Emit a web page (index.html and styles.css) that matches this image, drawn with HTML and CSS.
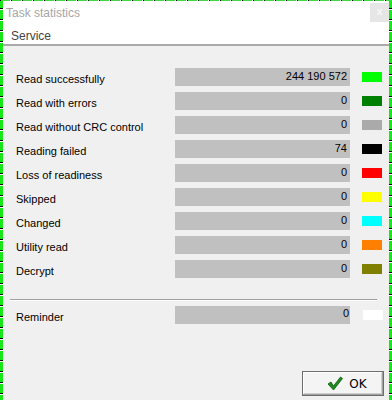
FILE: index.html
```html
<!DOCTYPE html>
<html lang="en">
<head>
    <title>Task statistics</title>
    <link rel="stylesheet" href="styles.css">
</head>
<body>
    <div class="frame">
        <div class="window">
            <!-- Title area -->
            <div class="titlebar">
                <div class="title-row">
                    <span class="title">Task statistics</span>
                    <span class="close">x</span>
                </div>
                <div class="menu">Service</div>
            </div>

            <div class="content">
                <div class="stats">
                    <div class="row">
                        <span class="label">Read successfully</span>
                        <span class="value">244 190 572</span>
                        <span class="swatch lime"></span>
                    </div>
                    <div class="row">
                        <span class="label">Read with errors</span>
                        <span class="value">0</span>
                        <span class="swatch green"></span>
                    </div>
                    <div class="row">
                        <span class="label">Read without CRC control</span>
                        <span class="value">0</span>
                        <span class="swatch gray"></span>
                    </div>
                    <div class="row">
                        <span class="label">Reading failed</span>
                        <span class="value">74</span>
                        <span class="swatch black"></span>
                    </div>
                    <div class="row">
                        <span class="label">Loss of readiness</span>
                        <span class="value">0</span>
                        <span class="swatch red"></span>
                    </div>
                    <div class="row">
                        <span class="label">Skipped</span>
                        <span class="value">0</span>
                        <span class="swatch yellow"></span>
                    </div>
                    <div class="row">
                        <span class="label">Changed</span>
                        <span class="value">0</span>
                        <span class="swatch cyan"></span>
                    </div>
                    <div class="row">
                        <span class="label">Utility read</span>
                        <span class="value">0</span>
                        <span class="swatch orange"></span>
                    </div>
                    <div class="row">
                        <span class="label">Decrypt</span>
                        <span class="value">0</span>
                        <span class="swatch olive"></span>
                    </div>
                </div>

                <div class="divider"></div>

                <div class="row reminder">
                    <span class="label">Reminder</span>
                    <span class="value">0</span>
                    <span class="swatch white"></span>
                </div>

                <div class="actions">
                    <button class="ok">
                        <svg width="16" height="15" viewBox="0 0 16 15">
                            <path d="M1 8 L4 6 L6.5 10 L13.5 1 L15.5 2.5 L6.5 14 Z" fill="#1e8c1e" stroke="#0b5a0b" stroke-width="0.8"/>
                        </svg>
                        <span>OK</span>
                    </button>
                </div>
            </div>
        </div>
    </div>
</body>
</html>
```

FILE: styles.css
```css
/* General styling */
body {
    margin: 0;
    padding: 0;
    font-family: "Liberation Sans", Arial, sans-serif;
    font-size: 11px;
    background-color: #f0f0f0;
}

/* Selection frame round the window */
.frame {
    width: 392px;
    height: 400px;
    box-sizing: border-box;
    padding: 1px 3px 0 3px;
    background:
        repeating-linear-gradient(to right, #000 0 1px, #3fd93f 1px 10px, #fff 10px 11px) top left / 100% 1px no-repeat,
        repeating-linear-gradient(to bottom, #19e619 0 8px, #000 8px 9px, #fff 9px 10px, #19e619 10px 11px);
}

.window {
    height: 100%;
    background-color: #f0f0f0;
    display: flex;
    flex-direction: column;
}

.titlebar {
    background-color: white;
    height: 43px;
    border-bottom: 2px solid #a9a9a9;
}

.title-row {
    display: flex;
    justify-content: space-between;
    align-items: flex-start;
    height: 22px;
}

.title {
    color: #a6a6a6;
    font-size: 12px;
    padding: 5px 0 0 3px;
}

.close {
    width: 19px;
    height: 19px;
    margin: 2px 0 0 0;
    background-color: #e6e6e6;
    color: #f8f8f8;
    font-weight: bold;
    font-size: 11px;
    text-align: center;
    line-height: 17px;
}

.menu {
    color: #444;
    font-size: 12px;
    padding: 6px 0 0 8px;
}

.content {
    flex: 1;
    display: flex;
    flex-direction: column;
    padding: 22px 0 0 0;
}

.stats {
    display: flex;
    flex-direction: column;
    gap: 6px;
}

.row {
    display: flex;
    align-items: center;
    height: 18px;
    padding-left: 13px;
}

.label {
    width: 159px;
    color: black;
    padding-top: 4px;
}

.value {
    width: 172px;
    height: 18px;
    padding-right: 3px;
    background-color: #c0c0c0;
    text-align: right;
    line-height: 16px;
    color: black;
}

.swatch {
    width: 20px;
    height: 10px;
    margin-left: 12px;
}

.lime { background-color: #00ff00; }
.green { background-color: #008000; }
.gray { background-color: #aaaaaa; }
.black { background-color: #000000; }
.red { background-color: #ff0000; }
.yellow { background-color: #ffff00; }
.cyan { background-color: #00ffff; }
.orange { background-color: #ff8000; }
.olive { background-color: #808000; }
.white { background-color: #ffffff; margin-left: 13px; }

.divider {
    margin: 21px 12px 0 7px;
    border-top: 1px solid #a0a0a0;
    border-bottom: 1px solid #fff;
}

.reminder {
    margin-top: 5px;
}

.reminder .label {
    padding-top: 3px;
}

.reminder .value {
    line-height: 14px;
    padding-right: 1px;
    width: 174px;
}

.actions {
    display: flex;
    justify-content: flex-end;
    padding: 47px 5px 0 0;
}

.ok {
    width: 82px;
    height: 25px;
    display: flex;
    align-items: center;
    justify-content: center;
    gap: 6px;
    background-color: #f4f4f4;
    border: 1px solid #6d6d6d;
    box-shadow: inset -1px -1px 0 #a0a0a0, inset 1px 1px 0 #fff, inset -2px -2px 0 #cfcfcf;
    font-family: "DejaVu Sans", sans-serif;
    font-size: 12px;
    color: black;
    padding: 0 0 0 8px;
}
```
